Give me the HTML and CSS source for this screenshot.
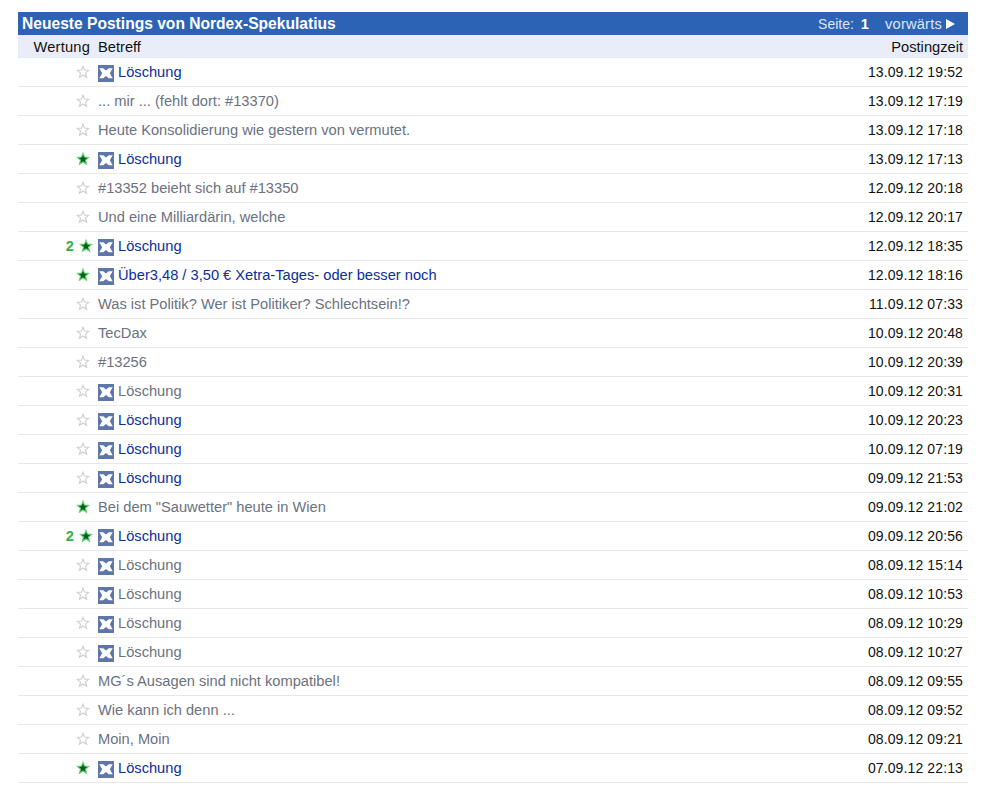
FILE: index.html
```html
<!DOCTYPE html>
<html>
<head>
    <title>Neueste Postings</title>
    <meta charset="utf-8" />
    <link rel="stylesheet" href="styles.css">
</head>
<body>
    <svg class="defs" width="0" height="0">
        <symbol id="star" viewBox="0 0 14 14">
            <path d="M7 1.2 8.5 5.1 12.7 5.4 9.5 8.1 10.6 12.3 7 10 3.4 12.3 4.5 8.1 1.3 5.4 5.5 5.1Z" />
        </symbol>
        <symbol id="del" viewBox="0 0 16 17">
            <rect width="16" height="17" fill="#5f76a8" />
            <path d="M1.3 3.3H5.2L8 5.6 10.8 3.3H14.7L11.8 8.3 14.7 13.3H10.8L8 11 5.2 13.3H1.3L4.2 8.3Z" fill="#fff" />
        </symbol>
    </svg>
    <div id="wrapper">
        <div class="title">
            <b>Neueste Postings von Nordex-Spekulatius</b>
            <span class="pager"><span class="label">Seite:</span> <b class="page">1</b> <span class="next">vorwärts<i class="arrow"></i></span></span>
        </div>
        <div class="head"><span class="rating">Wertung</span><span class="subject">Betreff</span><span class="time">Postingzeit</span></div>

        <div class="row"><span class="rating"><svg class="star"><use href="#star" /></svg></span><span class="subject"><a href="#"><svg class="del"><use href="#del" /></svg>Löschung</a></span><span class="time">13.09.12 19:52</span></div>
        <div class="row"><span class="rating"><svg class="star"><use href="#star" /></svg></span><span class="subject">... mir ... (fehlt dort: #13370)</span><span class="time">13.09.12 17:19</span></div>
        <div class="row"><span class="rating"><svg class="star"><use href="#star" /></svg></span><span class="subject">Heute Konsolidierung wie gestern von vermutet.</span><span class="time">13.09.12 17:18</span></div>
        <div class="row"><span class="rating"><svg class="star on"><use href="#star" /></svg></span><span class="subject"><a href="#"><svg class="del"><use href="#del" /></svg>Löschung</a></span><span class="time">13.09.12 17:13</span></div>
        <div class="row"><span class="rating"><svg class="star"><use href="#star" /></svg></span><span class="subject">#13352 beieht sich auf #13350</span><span class="time">12.09.12 20:18</span></div>
        <div class="row"><span class="rating"><svg class="star"><use href="#star" /></svg></span><span class="subject">Und eine Milliardärin, welche</span><span class="time">12.09.12 20:17</span></div>
        <div class="row"><span class="rating"><b class="count">2</b><svg class="star on"><use href="#star" /></svg></span><span class="subject"><a href="#"><svg class="del"><use href="#del" /></svg>Löschung</a></span><span class="time">12.09.12 18:35</span></div>
        <div class="row"><span class="rating"><svg class="star on"><use href="#star" /></svg></span><span class="subject"><a href="#"><svg class="del"><use href="#del" /></svg>Über3,48 / 3,50 € Xetra-Tages- oder besser noch</a></span><span class="time">12.09.12 18:16</span></div>
        <div class="row"><span class="rating"><svg class="star"><use href="#star" /></svg></span><span class="subject">Was ist Politik? Wer ist Politiker? Schlechtsein!?</span><span class="time">11.09.12 07:33</span></div>
        <div class="row"><span class="rating"><svg class="star"><use href="#star" /></svg></span><span class="subject">TecDax</span><span class="time">10.09.12 20:48</span></div>
        <div class="row"><span class="rating"><svg class="star"><use href="#star" /></svg></span><span class="subject">#13256</span><span class="time">10.09.12 20:39</span></div>
        <div class="row"><span class="rating"><svg class="star"><use href="#star" /></svg></span><span class="subject"><a href="#" class="read"><svg class="del"><use href="#del" /></svg>Löschung</a></span><span class="time">10.09.12 20:31</span></div>
        <div class="row"><span class="rating"><svg class="star"><use href="#star" /></svg></span><span class="subject"><a href="#"><svg class="del"><use href="#del" /></svg>Löschung</a></span><span class="time">10.09.12 20:23</span></div>
        <div class="row"><span class="rating"><svg class="star"><use href="#star" /></svg></span><span class="subject"><a href="#"><svg class="del"><use href="#del" /></svg>Löschung</a></span><span class="time">10.09.12 07:19</span></div>
        <div class="row"><span class="rating"><svg class="star"><use href="#star" /></svg></span><span class="subject"><a href="#"><svg class="del"><use href="#del" /></svg>Löschung</a></span><span class="time">09.09.12 21:53</span></div>
        <div class="row"><span class="rating"><svg class="star on"><use href="#star" /></svg></span><span class="subject">Bei dem "Sauwetter" heute in Wien</span><span class="time">09.09.12 21:02</span></div>
        <div class="row"><span class="rating"><b class="count">2</b><svg class="star on"><use href="#star" /></svg></span><span class="subject"><a href="#"><svg class="del"><use href="#del" /></svg>Löschung</a></span><span class="time">09.09.12 20:56</span></div>
        <div class="row"><span class="rating"><svg class="star"><use href="#star" /></svg></span><span class="subject"><a href="#" class="read"><svg class="del"><use href="#del" /></svg>Löschung</a></span><span class="time">08.09.12 15:14</span></div>
        <div class="row"><span class="rating"><svg class="star"><use href="#star" /></svg></span><span class="subject"><a href="#" class="read"><svg class="del"><use href="#del" /></svg>Löschung</a></span><span class="time">08.09.12 10:53</span></div>
        <div class="row"><span class="rating"><svg class="star"><use href="#star" /></svg></span><span class="subject"><a href="#" class="read"><svg class="del"><use href="#del" /></svg>Löschung</a></span><span class="time">08.09.12 10:29</span></div>
        <div class="row"><span class="rating"><svg class="star"><use href="#star" /></svg></span><span class="subject"><a href="#" class="read"><svg class="del"><use href="#del" /></svg>Löschung</a></span><span class="time">08.09.12 10:27</span></div>
        <div class="row"><span class="rating"><svg class="star"><use href="#star" /></svg></span><span class="subject">MG´s Ausagen sind nicht kompatibel!</span><span class="time">08.09.12 09:55</span></div>
        <div class="row"><span class="rating"><svg class="star"><use href="#star" /></svg></span><span class="subject">Wie kann ich denn ...</span><span class="time">08.09.12 09:52</span></div>
        <div class="row"><span class="rating"><svg class="star"><use href="#star" /></svg></span><span class="subject">Moin, Moin</span><span class="time">08.09.12 09:21</span></div>
        <div class="row"><span class="rating"><svg class="star on"><use href="#star" /></svg></span><span class="subject"><a href="#"><svg class="del"><use href="#del" /></svg>Löschung</a></span><span class="time">07.09.12 22:13</span></div>
    </div>
</body>
</html>
```

FILE: styles.css
```css
body {
    margin: 0;
    padding: 12px 19px 0 18px;
    background-color: #fff;
    font-family: "Liberation Sans", Arial, sans-serif;
    font-size: 14.67px;
    color: #6b7280;
}
.defs {
    position: absolute;
}
.title {
    display: flex;
    justify-content: space-between;
    align-items: center;
    height: 23px;
    padding: 0 13px 0 4px;
    background-color: #2c63b5;
    color: #fff;
    font-size: 15.6px;
}
.pager {
    display: flex;
    align-items: center;
    font-size: 14.67px;
    color: #dce6f5;
}
.label {
    font-size: 14px;
}
.page {
    margin: 0 16px 0 7px;
    font-size: 14.67px;
    color: #fff;
}
.next {
    display: flex;
    align-items: center;
    letter-spacing: 0.2px;
}
.arrow {
    width: 0;
    height: 0;
    margin-left: 4px;
    border-left: 9px solid #fff;
    border-top: 5px solid transparent;
    border-bottom: 5px solid transparent;
}
.head, .row {
    display: flex;
    align-items: center;
    height: 29px;
}
.head {
    height: 23px;
    background-color: #e8edf9;
    color: #111;
}
.head .rating {
    letter-spacing: 0.2px;
}
.row {
    border-bottom: 1px solid #e8e8e8;
    box-sizing: border-box;
}
.rating {
    display: flex;
    justify-content: flex-end;
    align-items: center;
    width: 72px;
    flex: none;
}
.subject {
    flex: 1;
    margin-left: 8px;
}
.time {
    margin-right: 5px;
    color: #111;
}
.row .time {
    font-size: 14px;
    letter-spacing: 0.12px;
}
.head .subject {
    color: #111;
}
a {
    display: flex;
    align-items: center;
    color: #0b2e9c;
    text-decoration: none;
}
a.read {
    color: #6b7280;
}
.del {
    width: 16px;
    height: 17px;
    margin: 2px 4px 0 0;
}
.star {
    width: 14px;
    height: 14px;
    margin-bottom: 1px;
    fill: #fff;
    stroke: #cfcfcf;
    stroke-width: 1.1;
}
.star.on {
    fill: #0b5f20;
    stroke: #62d670;
}
.count {
    margin-right: 5px;
    color: #33b04a;
}
.count + .star {
    margin-right: -3px;
}
```
